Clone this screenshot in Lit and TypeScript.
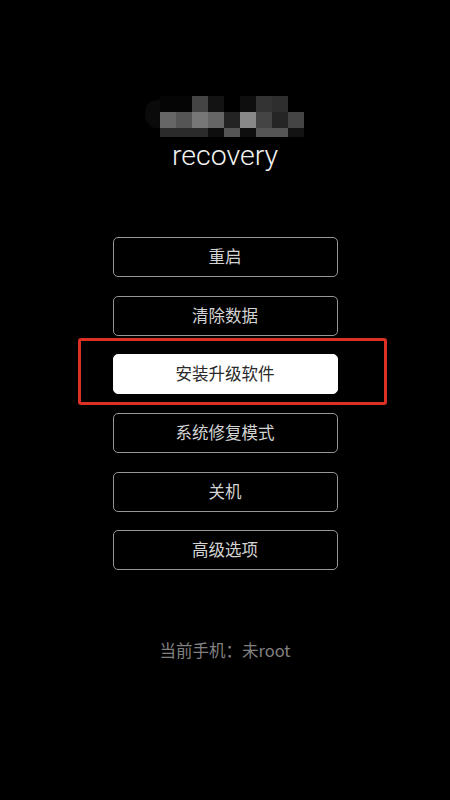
import { LitElement, html, css } from "lit";
import { customElement } from "lit/decorators.js";

const TOP = ["#050505", "#050505", "#444", "#131313", "#000", "#0e0e0e", "#333", "#2e2e2e", "#000"];
const MID = ["#666", "#555", "#777", "#666", "#232323", "#888", "#444", "#252525", "#444"];
const BOT = ["#2b2b2b", "#2b2b2b", "#2b2b2b", "#0e0e0e", "#555", "#0e0e0e", "#555", "#555", "#131313"];
const ITEMS = ["重启", "清除数据", "安装升级软件", "系统修复模式", "关机", "高级选项"];
const ACTIVE = 2;

@customElement("app-root")
export class AppRoot extends LitElement {
  static styles = css`
    :host {
      display: block;
      width: 450px;
      height: 800px;
      background: #000;
      font-family: "Noto Sans CJK SC", "Noto Sans", sans-serif;
      overflow: hidden;
    }
    .page {
      display: flex;
      flex-direction: column;
      align-items: center;
      padding-top: 96px;
    }
    .logo {
      position: relative;
      display: grid;
      grid-template-columns: repeat(9, 16px);
      grid-template-rows: 16px 16px 9px;
      margin-left: 14px;
    }
    .logo i {
      display: block;
    }
    .smear {
      position: absolute;
      left: -15px;
      top: 4px;
      width: 15px;
      height: 28px;
      background: #0a0a0a;
      border-radius: 12px 0 0 12px;
    }
    .title {
      margin-top: 2px;
      height: 34px;
      font-family: Roboto, "Liberation Sans", sans-serif;
      font-weight: 300;
      font-size: 28.5px;
      line-height: 34px;
      color: #f2f2f2;
    }
    .menu {
      position: relative;
      display: flex;
      flex-direction: column;
      gap: 18.7px;
      margin-top: 64px;
    }
    .btn {
      box-sizing: border-box;
      width: 225px;
      height: 40px;
      display: flex;
      align-items: center;
      justify-content: center;
      border: 1px solid #969696;
      border-radius: 5px;
      color: #d4d4d4;
      font-size: 16.5px;
      line-height: 24px;
      padding-bottom: 2px;
      font-weight: 400;
    }
    .btn.active {
      background: #fff;
      border-color: #fff;
      color: #2a2a2a;
    }
    .frame {
      position: absolute;
      left: -35px;
      top: 101px;
      box-sizing: border-box;
      width: 309px;
      height: 67px;
      border: 3px solid #dc3025;
      border-radius: 3px;
    }
    .status {
      margin-top: 68px;
      color: #808080;
      font-size: 16.5px;
      font-weight: 400;
      line-height: 24px;
    }
  `;

  render() {
    return html`
      <div class="page">
        <div class="logo">
          <div class="smear"></div>
          ${[...TOP, ...MID, ...BOT].map((c) => html`<i style="background:${c}"></i>`)}
        </div>
        <div class="title">recovery</div>
        <div class="menu">
          ${ITEMS.map((t, i) => html`<div class="btn ${i === ACTIVE ? "active" : ""}">${t}</div>`)}
          <div class="frame"></div>
        </div>
        <div class="status">当前手机：未root</div>
      </div>
    `;
  }
}
